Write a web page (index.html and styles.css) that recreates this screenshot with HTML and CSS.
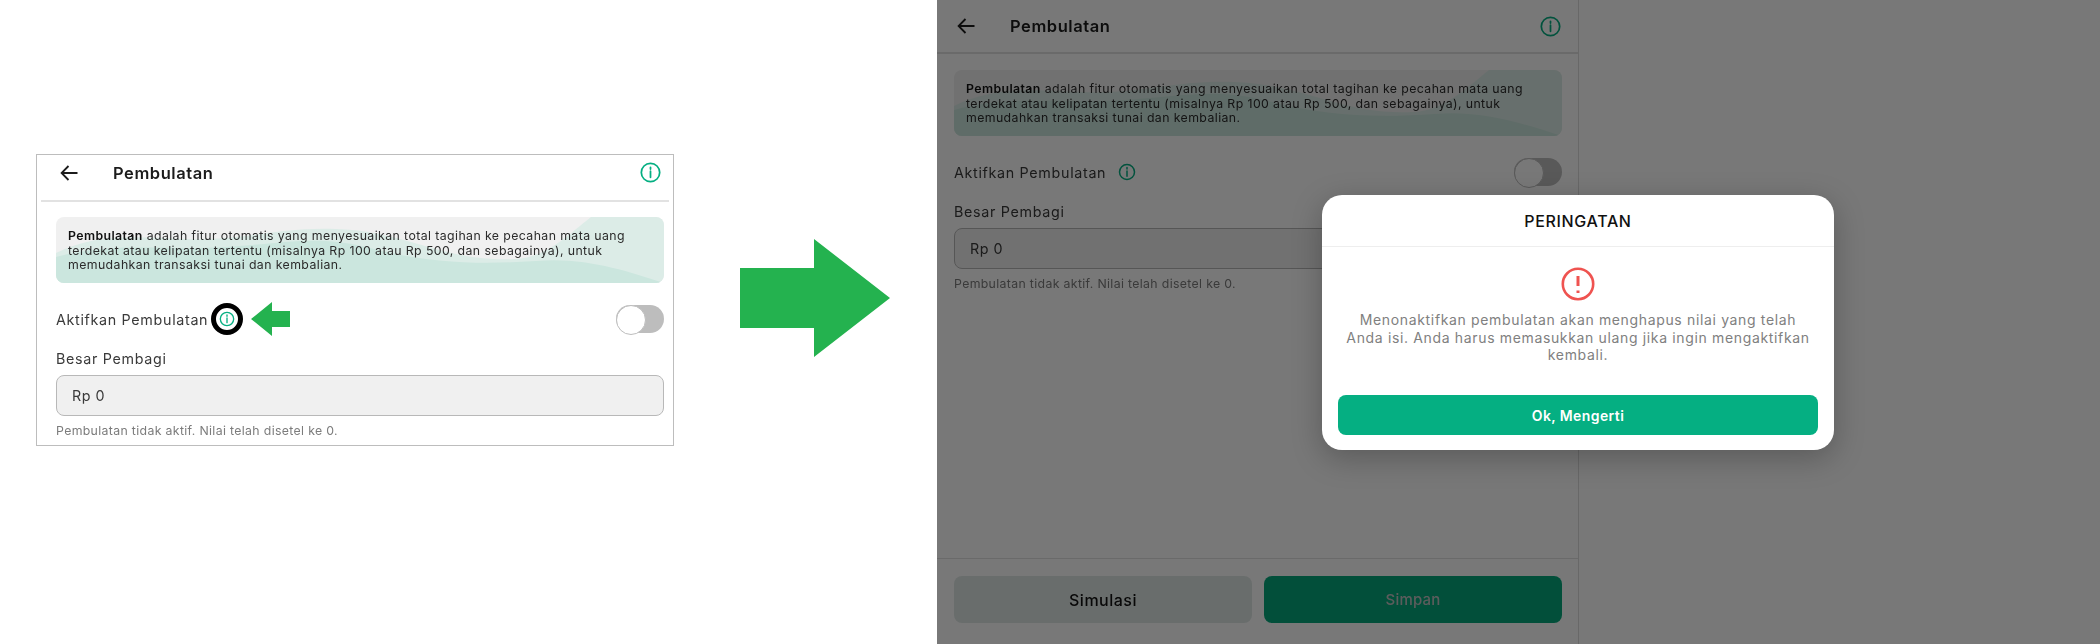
FILE: index.html
```html
<!DOCTYPE html>
<html lang="id">
<head>
    <meta charset="UTF-8">
    <meta name="viewport" content="width=device-width, initial-scale=1.0">
    <title>Pembulatan</title>
    <link rel="stylesheet" href="styles.css">
</head>
<body>
    <!-- Sebelum -->
    <section class="before">
        <div class="screen screen-card">
            <header class="top top-short">
                <svg class="back" viewBox="0 0 20 20"><path d="M18.5 10H2.5M9.5 3 2.6 10l6.9 7"/></svg>
                <h1>Pembulatan</h1>
                <svg class="info info-top" viewBox="0 0 24 24"><circle cx="12" cy="12" r="10.5"/><path d="M12 10.5v7M12 6v2"/></svg>
            </header>
            <div class="content">
                <p class="notice">
                    <svg class="wave" viewBox="0 0 608 66" preserveAspectRatio="none"><path d="M0 36C40 16 80 20 130 22 190 24 220 10 280 12 350 14 390 46 460 42 490 40 510 20 535 0H608V66H0Z"/><path class="wave-dark" d="M0 40C60 24 110 34 170 30 230 26 260 18 310 30 370 46 420 48 480 44 530 40 570 54 608 66H0Z"/></svg>
                    <span class="notice-text"><b>Pembulatan</b> adalah fitur otomatis yang menyesuaikan total tagihan ke pecahan mata uang terdekat atau kelipatan tertentu (misalnya Rp 100 atau Rp 500, dan sebagainya), untuk memudahkan transaksi tunai dan kembalian.</span>
                </p>
                <div class="toggle-row">
                    <span class="label">Aktifkan Pembulatan</span>
                    <span class="ring"><svg class="info info-small" viewBox="0 0 24 24"><circle cx="12" cy="12" r="10"/><path d="M12 10.5v7M12 6v2"/></svg></span>
                    <svg class="pointer" viewBox="0 0 39 34"><path d="M0 17 21 0V9H39V25H21V34Z"/></svg>
                    <span class="switch"></span>
                </div>
                <div class="label field-label">Besar Pembagi</div>
                <div class="field">Rp 0</div>
                <p class="hint">Pembulatan tidak aktif. Nilai telah disetel ke 0.</p>
            </div>
        </div>
        <svg class="big-arrow" viewBox="0 0 150 118"><path d="M0 29H74V0L150 59 74 118V89H0Z"/></svg>
    </section>

    <!-- Sesudah -->
    <section class="after">
        <div class="screen screen-full">
            <header class="top">
                <svg class="back" viewBox="0 0 20 20"><path d="M18.5 10H2.5M9.5 3 2.6 10l6.9 7"/></svg>
                <h1>Pembulatan</h1>
                <svg class="info info-top" viewBox="0 0 24 24"><circle cx="12" cy="12" r="10.5"/><path d="M12 10.5v7M12 6v2"/></svg>
            </header>
            <div class="content">
                <p class="notice">
                    <svg class="wave" viewBox="0 0 608 66" preserveAspectRatio="none"><path d="M0 36C40 16 80 20 130 22 190 24 220 10 280 12 350 14 390 46 460 42 490 40 510 20 535 0H608V66H0Z"/><path class="wave-dark" d="M0 40C60 24 110 34 170 30 230 26 260 18 310 30 370 46 420 48 480 44 530 40 570 54 608 66H0Z"/></svg>
                    <span class="notice-text"><b>Pembulatan</b> adalah fitur otomatis yang menyesuaikan total tagihan ke pecahan mata uang terdekat atau kelipatan tertentu (misalnya Rp 100 atau Rp 500, dan sebagainya), untuk memudahkan transaksi tunai dan kembalian.</span>
                </p>
                <div class="toggle-row">
                    <span class="label">Aktifkan Pembulatan</span>
                    <svg class="info info-plain" viewBox="0 0 24 24"><circle cx="12" cy="12" r="10"/><path d="M12 10.5v7M12 6v2"/></svg>
                    <span class="switch"></span>
                </div>
                <div class="label field-label">Besar Pembagi</div>
                <div class="field">Rp 0</div>
                <p class="hint">Pembulatan tidak aktif. Nilai telah disetel ke 0.</p>
            </div>
            <footer class="bottom">
                <button class="btn btn-light">Simulasi</button>
                <button class="btn btn-save">Simpan</button>
            </footer>
        </div>
        <div class="overlay"></div>
        <div class="dialog">
            <h2>PERINGATAN</h2>
            <div class="dialog-body">
                <svg class="warn" viewBox="0 0 34 34"><circle cx="17" cy="17" r="15.2"/><path d="M17 9v10M17 23.5v2.5"/></svg>
                <p>Menonaktifkan pembulatan akan menghapus nilai yang telah Anda isi. Anda harus memasukkan ulang jika ingin mengaktifkan kembali.</p>
                <button class="btn btn-ok">Ok, Mengerti</button>
            </div>
        </div>
    </section>
</body>
</html>
```

FILE: styles.css
```css
* {
    margin: 0;
    padding: 0;
    box-sizing: border-box;
}

body {
    display: flex;
    width: 2100px;
    height: 644px;
    overflow: hidden;
    background: #fff;
    color: #1c1c1c;
    font-family: Inter, 'Noto Sans', sans-serif;
}

/* gambar aslinya tangkapan layar yang agak buram */
.screen {
    filter: blur(0.3px);
}

/* bagian kiri */
.before {
    display: flex;
    align-items: flex-start;
    width: 937px;
    padding: 154px 0 0 36px;
}

.big-arrow {
    width: 150px;
    height: 118px;
    margin: 85px 0 0 66px;
    fill: #24b24f;
}

.screen-card {
    width: 638px;
    height: 292px;
    border: 1px solid #bdbdbd;
    padding: 0 4px;
}

.screen-card .content {
    padding: 15px 5px 0 15px;
}

/* bagian kanan */
.after {
    position: relative;
    flex: 1;
}

.screen-full {
    display: flex;
    flex-direction: column;
    width: 642px;
    height: 644px;
    border-right: 1px solid #ddd;
}

.screen-full .content {
    padding: 16px 16px 0 17px;
}

.overlay {
    position: absolute;
    inset: 0;
    background: rgba(0, 0, 0, 0.53);
}

/* header */
.top {
    display: flex;
    align-items: center;
    height: 54px;
    padding: 0 17px 0 19px;
    border-bottom: 2px solid #e2e2e2;
}

.top-short {
    height: 47px;
    padding: 0 8px 10px 18px;
}

.top h1 {
    font-size: 16.5px;
    font-weight: 600;
    letter-spacing: 0.55px;
    margin-left: 34px;
}

.back {
    width: 20px;
    height: 20px;
    fill: none;
    stroke: #1c1c1c;
    stroke-width: 1.8;
}

.info {
    fill: none;
    stroke: #05af82;
    stroke-width: 2;
    stroke-linecap: round;
}

.info-top {
    width: 21px;
    height: 21px;
    margin-left: auto;
}

.info-small {
    width: 16px;
    height: 16px;
    display: block;
}

.info-plain {
    width: 18px;
    height: 18px;
    margin-left: 12px;
}

/* isi */
.notice {
    position: relative;
    height: 66px;
    border-radius: 8px;
    overflow: hidden;
    background: #f0f0f0;
}

.wave {
    position: absolute;
    inset: 0;
    width: 100%;
    height: 100%;
    fill: #dcece7;
}

.wave-dark {
    fill: #cbe6de;
}

.notice-text {
    position: relative;
    display: block;
    padding: 12px 12px 0;
    font-size: 12.3px;
    line-height: 14.7px;
    letter-spacing: 0.41px;
    color: #2b2b2b;
}

.notice-text b {
    font-weight: 600;
    color: #111;
}

.toggle-row {
    display: flex;
    align-items: center;
    height: 32px;
    margin-top: 20px;
}

.label {
    font-size: 14.3px;
    letter-spacing: 0.68px;
    color: #3a3a3a;
}

.ring {
    display: flex;
    align-items: center;
    justify-content: center;
    width: 32px;
    height: 32px;
    margin-left: 3px;
    border: 5px solid #000;
    border-radius: 50%;
    background: #fff;
}

.pointer {
    width: 39px;
    height: 34px;
    margin-left: 8px;
    fill: #24b24f;
}

.switch {
    position: relative;
    width: 48px;
    height: 28px;
    margin-left: auto;
    border-radius: 14px;
    background: #bdbdbd;
}

/* tombol bulat di dalam switch */
.switch::after {
    content: "";
    position: absolute;
    left: 0;
    top: 0;
    width: 28px;
    height: 28px;
    border: 1px solid #bdbdbd;
    border-radius: 50%;
    background: #fff;
}

.field-label {
    margin-top: 16px;
    line-height: 16px;
}

.field {
    display: flex;
    align-items: center;
    height: 41px;
    margin-top: 8px;
    padding: 0 15px 1px;
    border: 1px solid #b8b8b8;
    border-radius: 8px;
    background: #f0f0f0;
    font-size: 14.3px;
    letter-spacing: 0.5px;
    color: #3a3a3a;
}

.hint {
    margin-top: 7px;
    font-size: 12.3px;
    letter-spacing: 0.34px;
    line-height: 16px;
    color: #7c7c7c;
}

/* footer */
.bottom {
    display: flex;
    gap: 12px;
    margin-top: auto;
    height: 86px;
    padding: 17px 16px 0 17px;
    border-top: 1px solid #e2e2e2;
}

.btn {
    border: none;
    border-radius: 8px;
    font-family: inherit;
    font-size: 15px;
    font-weight: 500;
}

.bottom .btn {
    flex: 1;
    height: 47px;
}

.bottom .btn-light {
    background: #e0e8e6;
    color: #111;
    font-size: 16px;
    letter-spacing: 0.5px;
}

.bottom .btn-save {
    background: #05a97c;
    color: #c4c4c4;
    letter-spacing: 0.2px;
}

/* dialog */
.dialog {
    position: absolute;
    left: 385px;
    top: 195px;
    width: 512px;
    height: 255px;
    border-radius: 20px;
    background: #fff;
    box-shadow: 0 8px 30px rgba(0, 0, 0, 0.25);
}

.dialog h2 {
    height: 52px;
    border-bottom: 1px solid #eee;
    font-size: 16px;
    font-weight: 500;
    line-height: 52px;
    letter-spacing: 0.65px;
    text-align: center;
    color: #111;
}

.dialog-body {
    display: flex;
    flex-direction: column;
    align-items: center;
    padding: 20px 16px 0;
}

.warn {
    width: 34px;
    height: 34px;
    fill: none;
    stroke: #ef5350;
    stroke-width: 2.6;
}

.warn path {
    stroke-width: 3;
}

.dialog p {
    margin-top: 10px;
    padding: 0 4px;
    height: 54px;
    font-size: 14px;
    line-height: 17.5px;
    letter-spacing: 0.65px;
    text-align: center;
    color: #808080;
}

.btn-ok {
    width: 480px;
    height: 40px;
    margin-top: 30px;
    background: #05af82;
    color: #fff;
    font-weight: 600;
    font-size: 14px;
    letter-spacing: 0.4px;
}
```
